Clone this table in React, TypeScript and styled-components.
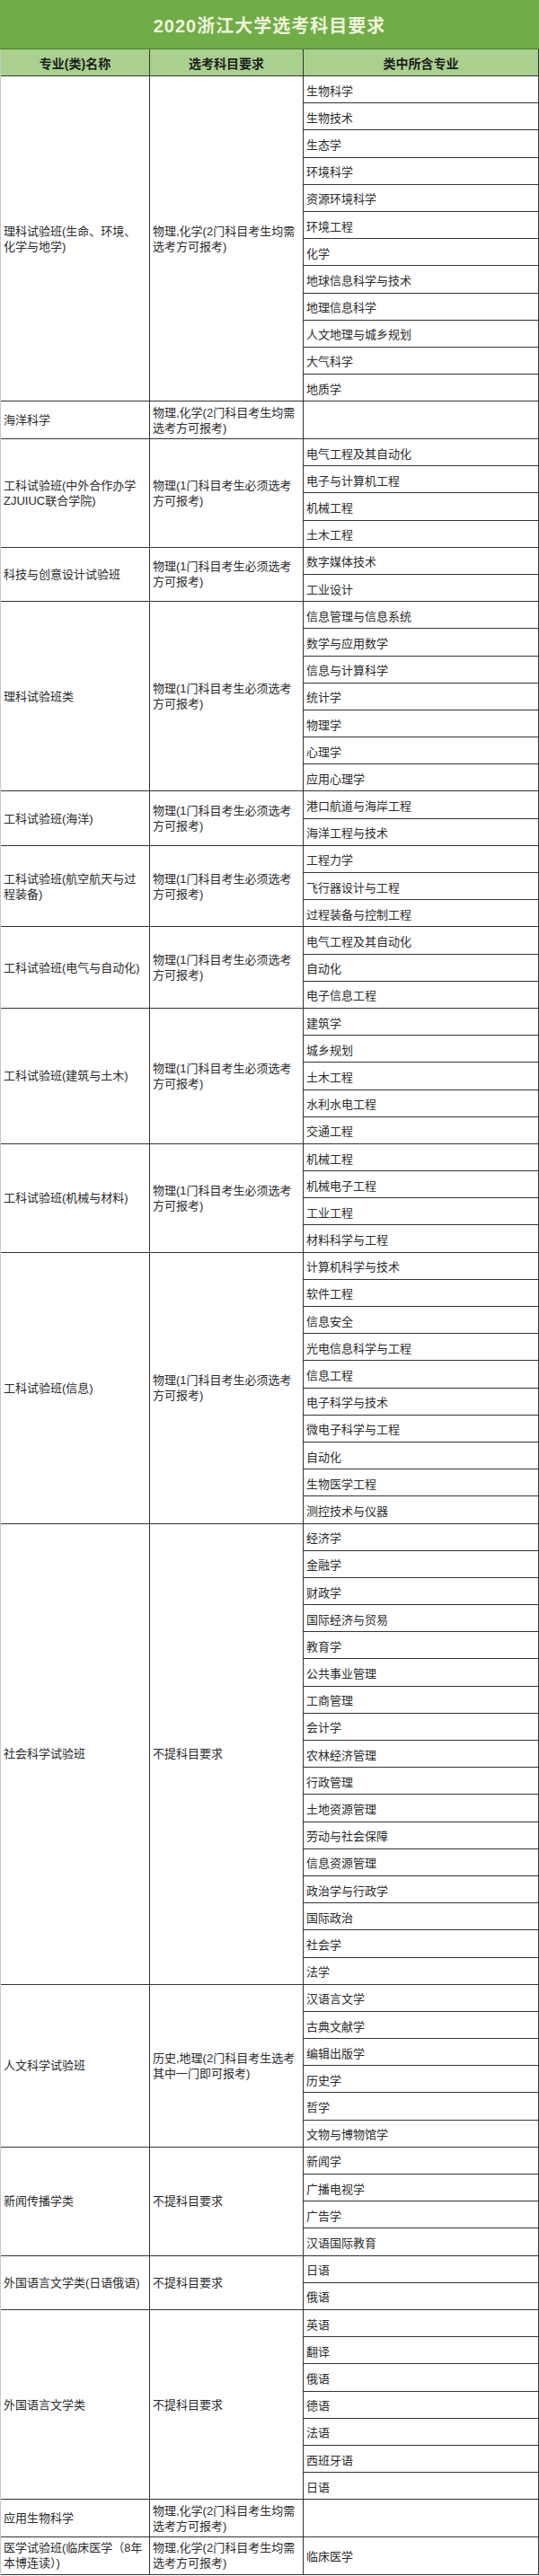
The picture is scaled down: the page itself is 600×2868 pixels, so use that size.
import React from 'react';
import styled, { createGlobalStyle } from 'styled-components';

const ROW = 30.19;
const TALL = 41.8;

const R2 = '物理,化学(2门科目考生均需选考方可报考)';
const R1 = '物理(1门科目考生必须选考方可报考)';
const R0 = '不提科目要求';
const RH = '历史,地理(2门科目考生选考其中一门即可报考)';

interface Group {
  name: string;
  req: string;
  majors: string[];
  tall?: boolean;
}

const groups: Group[] = [
  {
    name: '理科试验班(生命、环境、化学与地学)',
    req: R2,
    majors: ['生物科学', '生物技术', '生态学', '环境科学', '资源环境科学', '环境工程', '化学', '地球信息科学与技术', '地理信息科学', '人文地理与城乡规划', '大气科学', '地质学'],
  },
  { name: '海洋科学', req: R2, majors: [], tall: true },
  {
    name: '工科试验班(中外合作办学ZJUIUC联合学院)',
    req: R1,
    majors: ['电气工程及其自动化', '电子与计算机工程', '机械工程', '土木工程'],
  },
  { name: '科技与创意设计试验班', req: R1, majors: ['数字媒体技术', '工业设计'] },
  {
    name: '理科试验班类',
    req: R1,
    majors: ['信息管理与信息系统', '数学与应用数学', '信息与计算科学', '统计学', '物理学', '心理学', '应用心理学'],
  },
  { name: '工科试验班(海洋)', req: R1, majors: ['港口航道与海岸工程', '海洋工程与技术'] },
  { name: '工科试验班(航空航天与过程装备)', req: R1, majors: ['工程力学', '飞行器设计与工程', '过程装备与控制工程'] },
  { name: '工科试验班(电气与自动化)', req: R1, majors: ['电气工程及其自动化', '自动化', '电子信息工程'] },
  { name: '工科试验班(建筑与土木)', req: R1, majors: ['建筑学', '城乡规划', '土木工程', '水利水电工程', '交通工程'] },
  { name: '工科试验班(机械与材料)', req: R1, majors: ['机械工程', '机械电子工程', '工业工程', '材料科学与工程'] },
  {
    name: '工科试验班(信息)',
    req: R1,
    majors: ['计算机科学与技术', '软件工程', '信息安全', '光电信息科学与工程', '信息工程', '电子科学与技术', '微电子科学与工程', '自动化', '生物医学工程', '测控技术与仪器'],
  },
  {
    name: '社会科学试验班',
    req: R0,
    majors: ['经济学', '金融学', '财政学', '国际经济与贸易', '教育学', '公共事业管理', '工商管理', '会计学', '农林经济管理', '行政管理', '土地资源管理', '劳动与社会保障', '信息资源管理', '政治学与行政学', '国际政治', '社会学', '法学'],
  },
  { name: '人文科学试验班', req: RH, majors: ['汉语言文学', '古典文献学', '编辑出版学', '历史学', '哲学', '文物与博物馆学'] },
  { name: '新闻传播学类', req: R0, majors: ['新闻学', '广播电视学', '广告学', '汉语国际教育'] },
  { name: '外国语言文学类(日语俄语)', req: R0, majors: ['日语', '俄语'] },
  { name: '外国语言文学类', req: R0, majors: ['英语', '翻译', '俄语', '德语', '法语', '西班牙语', '日语'] },
  { name: '应用生物科学', req: R2, majors: [], tall: true },
  { name: '医学试验班(临床医学（8年本博连读）)', req: R2, majors: ['临床医学'], tall: true },
];

const GlobalStyle = createGlobalStyle`
  * { box-sizing: border-box; }
  body {
    margin: 0;
    background: #fff;
    font-family: "Liberation Sans", "Noto Sans CJK SC", sans-serif;
  }
`;

const Page = styled.div`
  width: 600px;
`;

const Title = styled.div`
  height: 55px;
  display: flex;
  align-items: center;
  justify-content: center;
  background: #70ad47;
  color: #eef3dc;
  font-size: 20px;
  font-weight: bold;
  letter-spacing: 1px;
  border-bottom: 1px solid #4f7f34;
`;

const Table = styled.div`
  border-left: 1px solid #c8c8c8;
  border-right: 1px solid #333;
`;

const Columns = styled.div`
  display: grid;
  grid-template-columns: 166px 171px 1fr;
`;

const HeaderRow = styled(Columns)`
  height: 30px;
  background: #a9d08e;
  border-bottom: 1px solid #333;
`;

const HeadCell = styled.div<{ $last?: boolean }>`
  display: flex;
  align-items: center;
  justify-content: center;
  font-size: 14px;
  font-weight: bold;
  color: #1d1d1d;
  border-right: ${(p) => (p.$last ? 'none' : '1px solid #333')};
`;

const GroupRow = styled(Columns)<{ $tall?: boolean }>`
  min-height: ${(p) => (p.$tall ? TALL : 0)}px;
`;

const TextCell = styled.div`
  display: flex;
  align-items: center;
  padding: 0 4px 0 3px;
  font-size: 13px;
  line-height: 17px;
  color: #2b2b2b;
  border-right: 1px solid #333;
  border-bottom: 1px solid #333;
`;

const ListCell = styled.div<{ $empty?: boolean }>`
  display: flex;
  flex-direction: column;
  border-bottom: ${(p) => (p.$empty ? '1px solid #333' : 'none')};
`;

const Item = styled.div`
  flex: 1 0 auto;
  min-height: ${ROW}px;
  display: flex;
  align-items: center;
  padding: 1px 4px 0 3px;
  font-size: 13px;
  color: #2b2b2b;
  border-bottom: 1px solid #333;
`;

const App: React.FC = () => {
  return (
    <Page>
      <GlobalStyle />
      <Title>2020浙江大学选考科目要求</Title>
      <Table>
        <HeaderRow>
          <HeadCell>专业(类)名称</HeadCell>
          <HeadCell>选考科目要求</HeadCell>
          <HeadCell $last>类中所含专业</HeadCell>
        </HeaderRow>
        {groups.map((g, i) => (
          <GroupRow key={i} $tall={g.tall}>
            <TextCell>{g.name}</TextCell>
            <TextCell>{g.req}</TextCell>
            <ListCell $empty={g.majors.length === 0}>
              {g.majors.map((m, j) => (
                <Item key={j}>{m}</Item>
              ))}
            </ListCell>
          </GroupRow>
        ))}
      </Table>
    </Page>
  );
};

export default App;
